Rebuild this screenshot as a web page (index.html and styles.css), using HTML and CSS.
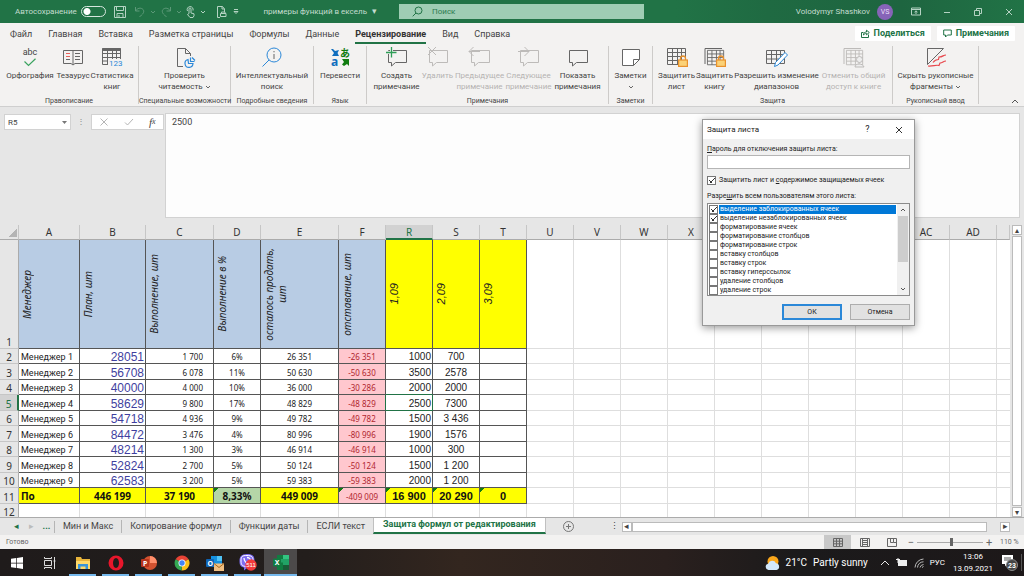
FILE: index.html
```html
<!DOCTYPE html>
<html lang="ru">
<head>
<meta charset="utf-8">
<meta name="viewport" content="width=device-width, initial-scale=1">
<title>примеры функций в ексель</title>
<link rel="stylesheet" href="styles.css">
</head>
<body>
<svg class="defs" aria-hidden="true">
  <symbol id="bubble" viewBox="0 0 22 20"><path d="M2.500 3.500h18v12h-11l-4 3.500v-3.500h-3z"/></symbol>
  <symbol id="sheet" viewBox="0 0 22 20"><path d="M1.500 1.500h18v16h-18zM1.500 5.500h18M1.500 9.500h18M1.500 13.500h18M6.500 1.500v16M11.500 1.500v16M15.500 1.500v16"/></symbol>
  <symbol id="lock" viewBox="0 0 10 12"><path d="M2.500 5V3.500a2.500 2.500 0 0 1 5 0V5" fill="none" stroke="#e8912d" stroke-width="1.300"/><rect x=".6" y="5" width="8.800" height="6.400" fill="#fbd277" stroke="#e8912d" stroke-width="1.200"/></symbol>
  <symbol id="chev" viewBox="0 0 6 4"><path d="M1 1l2 2 2-2"/></symbol>
</svg>

<header class="titlebar">
  <div class="title-left">
    <label class="autosave">Автосохранение <input type="checkbox" class="toggle"></label>
    <button class="tb save" aria-label="Сохранить"><svg width="12" height="12" viewBox="0 0 12 12"><path d="M.5.5h11v11h-11zM2.500.5v4h7v-4M3 11.500v-4h6v4M5 11V9"/></svg></button>
    <button class="tb dim" aria-label="Отменить"><svg width="12" height="12" viewBox="0 0 12 12"><path d="M1.500 1v4h4M1.500 5c2-3 5-3.500 7-2s1.500 4-1 6l-2 2"/></svg><svg width="6" height="4"><use href="#chev"/></svg></button>
    <button class="tb dim" aria-label="Повторить"><svg width="12" height="12" viewBox="0 0 12 12"><path d="M10.500 1v4h-4M10.500 5c-2-3-5-3.500-7-2s-1.500 4 1 6l2 2"/></svg><svg width="6" height="4"><use href="#chev"/></svg></button>
    <button class="tb" aria-label="Режим касания"><svg width="10" height="12" viewBox="0 0 10 12"><path d="M3 7.500V3a1 1 0 0 1 2 0v4l3 .8v2L7 11.500H4L1.500 8.500zM1.500 5a3 3 0 1 1 5.500-.5"/></svg><svg width="6" height="4"><use href="#chev"/></svg></button>
    <button class="tb print" aria-label="Печать"><svg width="11" height="12" viewBox="0 0 11 12"><path d="M4 11.500H1.500V.5h5l2 2.500v3M6 .5V3h2.500M4.500 7.500h5.500v3H4.500zM5.500 7.500V6h3.500v1.500"/></svg></button>
    <button class="tb" aria-label="Настройка"><svg width="6" height="6" viewBox="0 0 6 6"><path d="M1 .5h4M1 2.500l2 2 2-2z"/></svg></button>
    <button class="docname">примеры функций в ексель <span class="caret">▾</span></button>
  </div>
  <label class="search"><svg width="11" height="11" viewBox="0 0 11 11"><circle cx="6.500" cy="4.500" r="3.500"/><path d="M4 7L.7 10.300"/></svg><input type="text" placeholder="Поиск" aria-label="Поиск"></label>
  <div class="title-right">
    <span>Volodymyr Shashkov</span><span class="avatar">VS</span>
    <button class="win" aria-label="Параметры ленты"><svg width="10" height="9" viewBox="0 0 10 9"><path d="M.5 1h9v7h-9zM.5 2.500h9M5 7V4M3.500 5.200L5 3.800l1.500 1.400"/></svg></button>
    <button class="win" aria-label="Свернуть"><svg width="8" height="8"><path d="M1 4.500h6"/></svg></button>
    <button class="win" aria-label="Восстановить"><svg width="8" height="8"><path d="M.5 2.500h5v5h-5zM2.500 2.500v-2h5v5h-2"/></svg></button>
    <button class="win" aria-label="Закрыть"><svg width="8" height="8"><path d="M1 1l6 6M7 1L1 7"/></svg></button>
  </div>
</header>

<nav class="tabs">
  <a href="#">Файл</a><a href="#">Главная</a><a href="#">Вставка</a><a href="#">Разметка страницы</a><a href="#">Формулы</a><a href="#">Данные</a><a href="#" class="active">Рецензирование</a><a href="#">Вид</a><a href="#">Справка</a>
  <button class="pill share"><svg width="9" height="9" viewBox="0 0 9 9"><path d="M2.500 3.500h-2v5h7v-3M2.500 6c0-2 1-3 3-3V1.200L8.300 3.500 5.500 5.800V4.500c-1.500 0-2 .5-3 1.500z"/></svg>Поделиться</button>
  <button class="pill"><svg width="9" height="9" viewBox="0 0 9 9"><path d="M.7 1h7.600v5H4.500L2.500 8V6H.7z"/></svg>Примечания</button>
</nav>

<section class="ribbon">
  <div class="group g-spell">
    <div class="tools">
      <button class="tool w50"><span class="abc">abc<svg width="14" height="9" viewBox="0 0 14 9"><path d="M1.500 3.500l4 4L12.500.8" fill="none" stroke="#3aa35f" stroke-width="1.200"/></svg></span>Орфография</button>
      <button class="tool w36"><svg width="22" height="20" viewBox="0 0 22 20"><path d="M11 3.500v14M11 3.500H1.500v13H9l2 1.500 2-1.500h7.500v-13zM13 6.500h5M13 9.500h5M13 12.500h5M4 12.500h4"/><path d="M4 6.500h4M4 9.500h4" stroke="#e8605a"/></svg>Тезаурус</button>
      <button class="tool w42"><svg width="22" height="20" viewBox="0 0 22 20"><path d="M1.500 1.500h18v16h-18zM1.500 6.500h18M1.500 10.500h18M1.500 14h6M6.500 4v13M11.500 4v8M15.500 4v8"/><path d="M1.500 2.500h18" stroke-width="3"/><rect x="7" y="12" width="15" height="8" fill="#f3f2f1" stroke="none"/><text x="8" y="19" class="n123">123</text></svg>Статистика<br>книг</button>
    </div>
    <div class="caption">Правописание</div>
  </div>
  <div class="group g-access">
    <div class="tools"><button class="tool"><svg width="22" height="20" viewBox="0 0 22 20"><path d="M9 19.500H3.500v-18h8l5 5V9M11.500 1.500v5h5"/><path d="M14 12.500a4 4 0 1 0 5 4h-4.500zM16.500 10.500v4h4M18 10.500l3 3" stroke="#2b88d8" stroke-width="1.200"/></svg>Проверить<br>читаемость <svg class="ic" width="6" height="4"><use href="#chev"/></svg></button></div>
    <div class="caption">Специальные возможности</div>
  </div>
  <div class="group g-look">
    <div class="tools"><button class="tool"><svg width="22" height="20" viewBox="0 0 22 20"><circle cx="13" cy="8" r="7" stroke="#2b88d8"/><path d="M8 13l-6.500 6.500" stroke="#2b88d8"/><path d="M13 7v5M13 4v1.300"/></svg>Интеллектуальный<br>поиск</button></div>
    <div class="caption">Подробные сведения</div>
  </div>
  <div class="group g-lang">
    <div class="tools"><button class="tool"><svg width="22" height="20" viewBox="0 0 22 20"><path d="M2 2h2l2 2 4-1-1.500 3L10 9H3l2-3z" fill="#106ebe" stroke="none"/><text x="2" y="19" class="tr-a">a</text><text x="11" y="10" class="tr-ja">あ</text><path d="M13 12h7v7l-2-2-3 2-2-1.500 2-2.500z" fill="#107c10" stroke="none"/></svg>Перевести</button></div>
    <div class="caption">Язык</div>
  </div>
  <div class="group g-comm">
    <div class="tools">
      <button class="tool w46"><svg width="22" height="20" viewBox="0 0 22 20"><use href="#bubble"/><path d="M0 5.500h11M5.500 0v11" stroke="#f3f2f1" stroke-width="3"/><path d="M0 5.500h10.500M5.500 0v10.500" stroke="#2f9e58" stroke-width="1.300"/></svg>Создать<br>примечание</button>
      <button class="tool w36" disabled><svg width="22" height="20" viewBox="0 0 22 20"><use href="#bubble"/><path d="M1 0l8 8M9 0L1 8"/></svg>Удалить</button>
      <button class="tool w48" disabled><svg width="22" height="20" viewBox="0 0 22 20"><use href="#bubble"/><path d="M0 4.500h11M4.500 0L0 4.500 4.500 9"/></svg>Предыдущее<br>примечание</button>
      <button class="tool w50" disabled><svg width="22" height="20" viewBox="0 0 22 20"><use href="#bubble"/><path d="M0 4.500h11M6.500 0L11 4.500 6.500 9"/></svg>Следующее<br>примечание</button>
      <button class="tool w48"><svg width="22" height="20"><use href="#bubble"/></svg>Показать<br>примечания</button>
    </div>
    <div class="caption">Примечания</div>
  </div>
  <div class="group g-note">
    <div class="tools"><button class="tool"><svg width="22" height="20" viewBox="0 0 22 20"><path d="M2.500 2.500h17v10l-6 6h-11zM13.500 18.500v-6h6" fill="#fff"/></svg>Заметки<br><svg class="ic" width="6" height="4"><use href="#chev"/></svg></button></div>
    <div class="caption">Заметки</div>
  </div>
  <div class="group g-prot">
    <div class="tools">
      <button class="tool w38"><svg width="22" height="20" viewBox="0 0 22 20"><use href="#sheet"/><use href="#lock" x="12" y="8" width="10" height="12"/></svg>Защитить<br>лист</button>
      <button class="tool w38"><svg width="22" height="20" viewBox="0 0 22 20"><path d="M1 17V1.500h17"/><use href="#sheet" x="2" y="2" width="20" height="18"/><use href="#lock" x="12" y="8" width="10" height="12"/></svg>Защитить<br>книгу</button>
      <button class="tool w86"><svg width="22" height="20" viewBox="0 0 22 20"><path d="M.5 3.500h18v13h-18zM.5 7.500h18M.5 12h18M5.500 3.500v13M10.500 3.500v13M14.500 3.500v13"/><path d="M8.500 19.500l1-4L19 5.500l2.500 2.500-9.500 10z" fill="#fff" stroke="#2b88d8"/></svg>Разрешить изменение<br>диапазонов</button>
      <button class="tool w68" disabled><svg width="22" height="20" viewBox="0 0 22 20"><path d="M1 17V1.500h17"/><use href="#sheet" x="2" y="2" width="20" height="18"/><path d="M12 20c0-4 8-4 9 0z" fill="#eee"/><circle cx="16.500" cy="12.500" r="3" fill="#eee"/></svg>Отменить общий<br>доступ к книге</button>
    </div>
    <div class="caption">Защита</div>
  </div>
  <div class="group g-ink">
    <div class="tools"><button class="tool"><svg width="22" height="20" viewBox="0 0 22 20"><path d="M2.500 1.500h16l-16 16z"/><path d="M21 8c-3 0-3 2-7 2l-.5 2.500c-3 0-4 1-5.500 3M21 14c-3 0-3 2-6 2l-1 2.500c-3-1-6 1-11 .5" stroke="#e8474c" stroke-width="1.200"/></svg>Скрыть рукописные<br>фрагменты <svg class="ic" width="6" height="4"><use href="#chev"/></svg></button></div>
    <div class="caption">Рукописный ввод</div>
  </div>
  <button class="collapse" aria-label="Свернуть ленту"><svg width="8" height="5" viewBox="0 0 8 5"><path d="M1 4l3-3 3 3"/></svg></button>
</section>

<section class="formula">
  <div class="namebox"><input type="text" value="R5" aria-label="Имя"><svg width="5" height="3"><path d="M0 0h5L2.500 3z"/></svg></div>
  <span class="dots">⋮</span>
  <div class="fxbox">
    <button aria-label="Отмена"><svg width="10" height="10"><path d="M1.500 1.500l7 7M8.500 1.500l-7 7"/></svg></button>
    <button aria-label="Ввод"><svg width="10" height="10"><path d="M1 5.500L3.500 8 9 2"/></svg></button>
    <button class="fx" aria-label="Вставить функцию"><i>f</i><sub>x</sub></button>
  </div>
  <textarea class="fxinput" aria-label="Строка формул">2500</textarea>
</section>

<main class="sheet">
  <table class="cells">
    <colgroup><col class="c19"><col class="c61"><col class="c66"><col class="c68"><col class="c47"><col class="c78"><col class="c47" span="14"><col></colgroup>
    <thead><tr><th class="corner"></th><th>A</th><th>B</th><th>C</th><th>D</th><th>E</th><th>F</th><th class="sel">R</th><th>S</th><th>T</th><th>U</th><th>V</th><th>W</th><th>X</th><th></th><th></th><th></th><th></th><th>AC</th><th>AD</th><th></th></tr></thead>
    <tbody>
      <tr class="heads"><th>1</th><td><span>Менеджер</span></td><td><span>План, шт</span></td><td><span>Выполнение, шт</span></td><td><span>Выполнение в %</span></td><td><span>осталось продать,<br>шт</span></td><td><span>отставание, шт</span></td><td class="day"><span>1,09</span></td><td class="day"><span>2,09</span></td><td class="day"><span>3,09</span></td><td class="blank" colspan="11"></td></tr>
      <tr><th>2</th><td>Менеджер 1</td><td>28051</td><td>1 700</td><td>6%</td><td>26 351</td><td>-26 351</td><td>1000</td><td>700</td><td></td><td class="blank" colspan="11"></td></tr>
      <tr><th>3</th><td>Менеджер 2</td><td>56708</td><td>6 078</td><td>11%</td><td>50 630</td><td>-50 630</td><td>3500</td><td>2578</td><td></td><td class="blank" colspan="11"></td></tr>
      <tr><th>4</th><td>Менеджер 3</td><td>40000</td><td>4 000</td><td>10%</td><td>36 000</td><td>-30 286</td><td class="above">2000</td><td>2000</td><td></td><td class="blank" colspan="11"></td></tr>
      <tr><th class="sel">5</th><td>Менеджер 4</td><td>58629</td><td>9 800</td><td>17%</td><td>48 829</td><td class="before">-48 829</td><td class="cursor">2500</td><td>7300</td><td></td><td class="blank" colspan="11"></td></tr>
      <tr><th>6</th><td>Менеджер 5</td><td>54718</td><td>4 936</td><td>9%</td><td>49 782</td><td>-49 782</td><td>1500</td><td>3 436</td><td></td><td class="blank" colspan="11"></td></tr>
      <tr><th>7</th><td>Менеджер 6</td><td>84472</td><td>3 476</td><td>4%</td><td>80 996</td><td>-80 996</td><td>1900</td><td>1576</td><td></td><td class="blank" colspan="11"></td></tr>
      <tr><th>8</th><td>Менеджер 7</td><td>48214</td><td>1 300</td><td>3%</td><td>46 914</td><td>-46 914</td><td>1000</td><td>300</td><td></td><td class="blank" colspan="11"></td></tr>
      <tr><th>9</th><td>Менеджер 8</td><td>52824</td><td>2 700</td><td>5%</td><td>50 124</td><td>-50 124</td><td>1500</td><td>1 200</td><td></td><td class="blank" colspan="11"></td></tr>
      <tr><th>10</th><td>Менеджер 9</td><td>62583</td><td>3 200</td><td>5%</td><td>59 383</td><td>-59 383</td><td>2000</td><td>1 200</td><td></td><td class="blank" colspan="11"></td></tr>
      <tr class="total"><th>11</th><td>По</td><td>446 199</td><td>37 190</td><td class="flag">8,33%</td><td>449 009</td><td class="flag">-409 009</td><td class="flag">16 900</td><td class="flag">20 290</td><td class="flag">0</td><td class="blank" colspan="11"></td></tr>
      <tr class="empty"><th>12</th><td></td><td></td><td></td><td></td><td></td><td></td><td></td><td></td><td></td><td class="blank" colspan="11"></td></tr>
    </tbody>
  </table>
  <div class="vscroll"><button aria-label="Вверх">▴</button><div class="track"></div><button aria-label="Вниз">▾</button></div>
</main>

<nav class="sheettabs">
  <button class="nav" aria-label="Предыдущий лист">◂</button><button class="nav off" aria-label="Следующий лист">▸</button><button class="nav more">...</button>
  <a href="#">Мин и Макс</a><a href="#">Копирование формул</a><a href="#">Функции даты</a><a href="#" class="last">ЕСЛИ текст</a><a href="#" class="active">Защита формул от редактирования</a>
  <button class="add" aria-label="Новый лист"><svg width="11" height="11"><circle cx="5.500" cy="5.500" r="5"/><path d="M5.500 3v5M3 5.500h5"/></svg></button>
  <div class="hscroll"><span>⋮</span><button aria-label="Влево">◂</button><div class="track"></div><button aria-label="Вправо">▸</button></div>
</nav>

<footer class="status">
  <span>Готово</span>
  <div class="views">
    <button class="on" aria-label="Обычный"><svg width="10" height="9"><path d="M.5.5h9v8h-9zM.5 3.200h9M.5 5.800h9M3.500.5v8M6.500.5v8"/></svg></button>
    <button aria-label="Разметка"><svg width="10" height="9"><path d="M.5.5h9v8h-9zM2.500.5v8M7.500.5v8M3 2.500h4M3 4.500h4M3 6.500h4"/></svg></button>
    <button aria-label="Страничный"><svg width="10" height="9"><path d="M.5.5h9v8h-9zM3.500.5v4h3v-4M6.500 4.500h3"/></svg></button>
  </div>
  <button class="zoom">−</button><input type="range" class="range" value="52" aria-label="Масштаб"><button class="zoom">+</button><span class="pct">110 %</span>
</footer>

<footer class="taskbar">
  <button aria-label="Пуск"><svg width="12" height="12"><path d="M0 1.800L5.300 1v4.700H0zM6 .9L12 0v5.700H6zM0 6.400h5.300V11L0 10.300zM6 6.400h6V12l-6-.9z" fill="#fff"/></svg></button>
  <button aria-label="Представление задач"><svg width="12" height="12"><path d="M.5 0v1.500h7V0M.5 12v-1.500h7V12M.5 3.500h7v5h-7zM10.500 0v12M9.500 4h2" fill="none" stroke="#ddd"/></svg></button>
  <button class="run" aria-label="Проводник"><svg width="16" height="14"><path d="M1 1h5l1 2h8v10H1z" fill="#e9b53b"/><path d="M1 5h14v8H1z" fill="#ffd969"/><path d="M3 13V8h10v5h-2.500v-2.500h-5V13z" fill="#3a95d8"/></svg></button>
  <button class="run" aria-label="Opera"><svg width="16" height="16"><path d="M8 .5a7.500 7.500 0 1 0 0 15 7.500 7.500 0 1 0 0-15zM8 3c2 0 3 2.500 3 5s-1 5-3 5-3-2.500-3-5 1-5 3-5z" fill="#e8162b" fill-rule="evenodd"/></svg></button>
  <button class="run" aria-label="PowerPoint"><svg width="16" height="16"><circle cx="9" cy="8" r="7" fill="#d35230"/><path d="M9 1a7 7 0 0 1 7 7H9z" fill="#ff8f6b"/><rect y="4" width="8" height="8" rx="1" fill="#b7341c"/><text x="2" y="10.500" class="app">P</text></svg></button>
  <button class="run" aria-label="Chrome"><svg width="16" height="16"><path d="M8 8L1.600 4.200A7.500 7.500 0 0 1 14.500 4.300z" fill="#ea4335"/><path d="M8 8l6.500-3.700A7.500 7.500 0 0 1 7.500 15.500z" fill="#fbc116"/><path d="M8 8l-.5 7.500A7.500 7.500 0 0 1 1.600 4.200z" fill="#34a853"/><circle cx="8" cy="8" r="3.500" fill="#fff"/><circle cx="8" cy="8" r="2.700" fill="#4285f4"/></svg></button>
  <button class="run" aria-label="Outlook"><svg width="18" height="16"><path d="M5 1h11v11H5z" fill="#1490df"/><path d="M11 1h5v5h-5z" fill="#50c3f5"/><rect x="0" y="4" width="8" height="8" rx="1" fill="#0f64b5"/><text x="1.500" y="10.500" class="app">O</text><path d="M8 8.500h10V16H8z" fill="#f0bf82"/><path d="M8 8.500l5 4 5-4" fill="none" stroke="#a6691f"/></svg></button>
  <button class="run" aria-label="Viber"><svg width="18" height="17"><path d="M8 0c6 0 7.500 2 7.500 7S13 14 8 14l-3 2.500V13.500C1.500 13 .5 11 .5 7S2 0 8 0z" fill="#7f6df2"/><path d="M8 1.500c5 0 6 1.500 6 5.500s-2 5.500-6 5.500-6-1-6-5.500 1-5.500 6-5.500z" fill="none" stroke="#fff"/><path d="M5 4c0 3 2.500 6 5 6M8 3.500c2 0 3.500 1.500 3.500 3" fill="none" stroke="#fff" stroke-width="1.300"/><circle cx="12" cy="11" r="5.700" fill="#f23b3b"/><text x="12" y="13" text-anchor="middle" class="cnt">511</text></svg></button>
  <button class="run open" aria-label="Excel"><svg width="16" height="15"><path d="M4 0h12v15H4z" fill="#21a366"/><path d="M4 7.500h6V15H4zM4 0h6v4H4z" fill="#107c41"/><path d="M10 0h6v4h-6z" fill="#33c481"/><path d="M10 10h6v5H10z" fill="#185c37"/><rect y="3.500" width="8" height="8" rx="1" fill="#107c41"/><text x="1.800" y="10" class="app">X</text></svg></button>
  <div class="tray">
    <svg width="15" height="14"><circle cx="8" cy="5.500" r="5.500" fill="#fba71b"/><path d="M3.500 14a3.200 3.200 0 0 1-.3-6.300A4.200 4.200 0 0 1 11 7.300a3.400 3.400 0 0 1 .5 6.700z" fill="#d3e8fb"/></svg>
    <span class="weather"><span>21°C</span><span>Partly sunny</span></span>
    <svg width="10" height="6"><path d="M1 5l4-4 4 4" fill="none" stroke="#e8e8e8"/></svg>
    <svg width="12" height="9"><path d="M2 2h9v6H2z" fill="#eee"/><path d="M0 1.500h4M2 0v5" stroke="#eee"/></svg>
    <svg width="10" height="10"><path d="M1 9.500A9 9 0 0 1 9.500 1M3.500 9.500A6 6 0 0 1 9.500 3.800M6 9.500a4 4 0 0 1 3.500-3M8 9.500l1.500-1" fill="none" stroke="#bbb"/></svg>
    <span class="lang">РУС</span>
    <time>13:06<br>13.09.2021</time>
    <button class="notif" aria-label="Уведомления"><svg width="18" height="17"><path d="M1 1h11v9H6l-2 2.500V10H1z" fill="#fff"/><path d="M3 4h7M3 6h7" stroke="#555"/><circle cx="11" cy="11" r="5.500" fill="#444" stroke="#888"/><text x="11" y="14" text-anchor="middle" class="cnt big">23</text></svg></button>
  </div>
</footer>

<form class="dialog" role="dialog" aria-labelledby="dt">
  <div class="dlg-title"><span id="dt">Защита листа</span><button type="button" class="help">?</button><button type="button" aria-label="Закрыть"><svg width="8" height="8"><path d="M1 1l6 6M7 1L1 7" fill="none" stroke="#333"/></svg></button></div>
  <div class="dlg-body">
    <label for="pw"><u>П</u>ароль для отключения защиты листа:</label>
    <input type="text" id="pw" class="pw">
    <label class="protect"><input type="checkbox" checked><span>Защитить лист и <u>с</u>одержимое защищаемых ячеек</span></label>
    <div>Разре<u>ш</u>ить всем пользователям этого листа:</div>
    <div class="list">
      <div class="items">
        <label class="hot"><input type="checkbox" checked><span>выделение заблокированных ячеек</span></label>
        <label><input type="checkbox" checked><span>выделение незаблокированных ячеек</span></label>
        <label><input type="checkbox"><span>форматирование ячеек</span></label>
        <label><input type="checkbox"><span>форматирование столбцов</span></label>
        <label><input type="checkbox"><span>форматирование строк</span></label>
        <label><input type="checkbox"><span>вставку столбцов</span></label>
        <label><input type="checkbox"><span>вставку строк</span></label>
        <label><input type="checkbox"><span>вставку гиперссылок</span></label>
        <label><input type="checkbox"><span>удаление столбцов</span></label>
        <label><input type="checkbox"><span>удаление строк</span></label>
      </div>
      <div class="bar"><svg width="6" height="4" viewBox="0 0 6 4"><path d="M1 3l2-2 2 2"/></svg><div class="thumb"></div><svg width="6" height="4"><use href="#chev"/></svg></div>
    </div>
    <div class="actions"><button type="button" class="ok">ОК</button><button type="button">Отмена</button></div>
  </div>
</form>
</body>
</html>
```
FILE: styles.css
```css
* { box-sizing: border-box; }
body { margin: 0; height: 100vh; display: flex; flex-direction: column; overflow: hidden; position: relative; background: #e6e6e6; color: #444; font: 8px/11px Roboto, "Noto Sans", sans-serif; white-space: nowrap; }
button, input, textarea { font: inherit; color: inherit; border: 0; padding: 0; margin: 0; background: none; }
button { display: flex; align-items: center; justify-content: center; }
a { color: inherit; text-decoration: none; }
svg { flex: none; overflow: visible; }
.defs { position: absolute; width: 0; height: 0; }

/* Title bar */
.titlebar { height: 23px; flex: none; display: grid; grid-template-columns: 399fr 245fr 380fr; align-items: center; background: linear-gradient(90deg, #217346 66%, #1f6a42 75%, #1e6540 88%, #217346); color: #c4dccf; }
.titlebar svg { fill: none; stroke: #b5d3c3; }
.title-left { display: flex; align-items: center; padding-left: 15px; }
.autosave { display: flex; align-items: center; justify-content: space-between; gap: 4px; width: 91px; }
.toggle { appearance: none; width: 25px; height: 11px; border: 1px solid #d6e7de; border-radius: 6px; background: radial-gradient(circle at 5px 50%, #fff 3px, transparent 4px); }
.tb { gap: 4px; margin-right: 4px; }
.save { margin: 0 8px; }
.print { margin: 0 6px; }
.dim { opacity: .4; }
.docname { margin-left: auto; margin-right: 22px; gap: 5px; }
.caret { font-size: 9px; }
.search { display: flex; align-items: center; gap: 9px; height: 15px; padding-left: 13px; background: #9fcdb4; color: #217346; }
.search svg { stroke: #217346; }
.search input { flex: 1; min-width: 0; outline: 0; }
.search input::placeholder { color: #2c7b50; opacity: 1; }
.title-right { display: flex; align-items: center; justify-content: flex-end; }
.avatar { width: 16px; height: 16px; margin: 0 7px; border-radius: 50%; background: #8764b8; color: #e9dff5; font-size: 7px; line-height: 16px; text-align: center; }
.win { width: 31px; height: 23px; margin: 0; }

/* Ribbon tabs */
.tabs { height: 21px; flex: none; display: flex; align-items: center; gap: 16px; padding: 0 9px 0 10px; background: #f3f2f1; font-size: 9px; }
.tabs a { height: 20px; line-height: 20px; }
.tabs .active { font-weight: 700; color: #333; box-shadow: inset 0 -2px #217346; }
.pill { height: 15px; padding: 0 6px; gap: 4px; background: #fff; border-radius: 1px; color: #217346; font-weight: 700; margin-left: -10px; }
.share { margin-left: auto; }
.pill svg { fill: none; stroke: #217346; }

/* Ribbon */
.ribbon { height: 63px; flex: none; display: flex; padding-top: 2px; background: #f3f2f1; border-bottom: 1px solid #cfcfcf; }
.group { display: flex; flex-direction: column; height: 58px; border-right: 1px solid #cdcbc9; }
.g-spell { width: 139px; }
.g-access { width: 92px; }
.g-look { width: 83px; }
.g-lang { width: 53px; }
.g-comm { width: 242px; }
.g-note { width: 44px; }
.g-prot { width: 240px; }
.g-ink { width: 86px; }
.tools { display: flex; flex: 1; justify-content: center; align-items: flex-start; }
.tool { display: block; text-align: center; padding-top: 1px; line-height: 11px; }
.tool > svg, .abc { display: block; margin: 0 auto 3px; }
.tool svg { fill: none; stroke: #666; }
.tool > .ic { display: inline-block; margin: 0; vertical-align: middle; }
.tool:disabled { color: #b5b3b1; }
.tool:disabled svg { stroke: #bdbbb9; }
.tool .abc { font-size: 9px; height: 20px; }
.abc svg { display: block; margin: 0 auto; }
.w36 { width: 36px; }
.w38 { width: 38px; }
.w42 { width: 42px; }
.w46 { width: 46px; }
.w48 { width: 48px; }
.w50 { width: 50px; }
.w68 { width: 68px; }
.w86 { width: 86px; }
.w36, .w38, .w42, .w46, .w48, .w50, .w68, .w86 { display: flex; flex-direction: column; align-items: center; }
.n123 { font-size: 8px; fill: #2b88d8; stroke: none; }
.tr-a { font: 700 12px "Noto Sans", sans-serif; fill: #106ebe; stroke: none; }
.tr-ja { font: 700 10px "Noto Sans CJK JP", sans-serif; fill: #107c10; stroke: none; }
.caption { text-align: center; font-size: 7px; line-height: 6px; }
.collapse { margin: auto 5px 0 auto; padding-bottom: 2px; align-self: flex-end; }
.collapse svg { fill: none; stroke: #555; }

/* Formula bar */
.formula { height: 118px; flex: none; display: flex; align-items: flex-start; padding: 6px 4px 7px; }
.namebox, .fxbox { display: flex; align-items: center; height: 16px; margin-top: 1px; background: #fff; border: 1px solid #d2d2d2; }
.namebox { width: 67px; padding: 0 3px; }
.namebox input { flex: 1; min-width: 0; }
.namebox svg { fill: #777; }
.dots { width: 20px; text-align: center; line-height: 17px; color: #888; }
.fxbox { width: 73px; justify-content: space-around; }
.fxbox svg { fill: none; stroke: #b5b5b5; }
.fx { font: 11px/12px "Liberation Serif", serif; }
.fx sub { font-size: 8px; font-style: italic; }
.fxinput { flex: 1; align-self: stretch; margin-left: 1px; padding: 2px 6px; border: 1px solid #d2d2d2; background: #fdfdfd; resize: none; outline: 0; font-size: 9px; line-height: 12px; }

/* Grid */
.sheet { flex: 1; min-height: 0; display: flex; overflow: hidden; border-bottom: 1px solid #ababab; }
.cells { flex: 1; min-width: 0; table-layout: fixed; border-spacing: 0; background: #fff; color: #222; align-self: flex-start; width: 100%; font-family: "Noto Sans", sans-serif; }
.c19 { width: 19px; }
.c47 { width: 47px; }
.c61 { width: 61px; }
.c66 { width: 66px; }
.c68 { width: 68px; }
.c78 { width: 78px; }
.cells th, .cells td { padding: 0; overflow: hidden; }
.cells th { background: #e6e6e6; font-weight: 400; font-size: 10px; line-height: 12px; color: #333; }
thead th { height: 15px; border-right: 1px solid #c6c6c6; border-bottom: 1px solid #ababab; }
.cells tbody th { border-right: 1px solid #ababab; border-bottom: 1px solid #c6c6c6; vertical-align: bottom; }
.cells .corner { background: linear-gradient(135deg, transparent 50%, #b4b4b4 50%) 8px 3px / 9px 9px no-repeat #e6e6e6; }
.cells .sel { background: #d2d2d2; color: #217346; }
thead .sel { border-bottom: 2px solid #217346; }
.cells tbody .sel { border-right: 2px solid #217346; }
tbody tr { height: 16px; }
tbody tr:nth-child(even) { height: 15px; }
.cells tbody td { border-right: 1px solid #555; border-bottom: 1px solid #555; text-align: center; line-height: 12px; padding-top: 2px; }
.cells tbody td:nth-child(2) { text-align: left; padding-left: 2px; font: 9px/12px Roboto, "Noto Sans", sans-serif; }
.cells tbody td:nth-child(3) { text-align: right; padding-right: 1px; font: 12px/12px "Liberation Sans", sans-serif; color: #3f3fa0; }
.cells tbody td:nth-child(4) { text-align: right; padding-right: 10px; }
.cells tbody td:nth-child(7) { background-color: #ffc7ce; color: #b0262e; }
.cells tbody td:nth-child(8), .cells tbody td:nth-child(9), .cells tbody td:nth-child(10) { font: 10px/12px "Liberation Sans", sans-serif; }
.cells tbody td:nth-child(8) { text-align: right; padding-right: 1px; }
.cells tbody .blank { padding: 0; border: 0; border-bottom: 1px solid #dedede; background: repeating-linear-gradient(90deg, transparent 0 46px, #dedede 46px 47px); }
.cells tbody .cursor { border-color: #217346; }
.cells tbody .above { border-bottom-color: #217346; }
.cells tbody .before { border-right-color: #217346; }
tbody .heads { height: 109px; }
.cells tbody .heads td:not(.blank) { background: #b8cce4; color: #222; text-align: left; padding: 0 0 0 2px; font: italic 10px/13px "Noto Sans", sans-serif; }
.heads span { display: block; margin: 0 auto 0 0; writing-mode: vertical-rl; transform: rotate(180deg); text-align: center; }
.cells tbody .heads .day:not(.blank) { background: #ff0; font: italic 11px/13px "Liberation Sans", sans-serif; padding-left: 2px; }
.cells tbody .total td:not(.blank) { background-color: #ff0; font: 700 10px/12px "Noto Sans", sans-serif; color: #111; text-align: center; padding: 1px 0 0; }
.cells tbody .total td:nth-child(2):nth-child(2) { text-align: left; padding-left: 2px; }
.cells tbody .total .flag:nth-child(n+8) { font: 700 11px/12px "Liberation Sans", sans-serif; }
.cells tbody .total .flag:nth-child(5):not(.blank) { background-color: #b5d6a7; }
.cells tbody .total .flag:nth-child(7):not(.blank) { background-color: #ffc7ce; color: #b0262e; font-weight: 400; font-size: 8px; padding-top: 2px; }
.flag { background-image: linear-gradient(135deg, #107c10 3px, transparent 3px); }
.cells tbody .empty td { border-color: #dedede; background-color: #fff; height: 14px; }
.vscroll { width: 14px; display: flex; flex-direction: column; align-items: center; }
.vscroll button { width: 10px; height: 10px; border: 1px solid #bbb; background: #fff; font-size: 8px; }
.vscroll .track { flex: 1; width: 10px; background: #fff; border: 1px solid #bbb; margin: 1px 0; }

/* Sheet tabs */
.sheettabs { height: 17px; flex: none; display: flex; align-items: center; font-size: 9px; padding-left: 9px; }
.sheettabs a { padding: 0 8px; line-height: 13px; border-right: 1px solid #b5b5b5; }
.sheettabs .last { border: 0; }
.sheettabs .active { align-self: flex-start; height: 16px; padding: 0 9px; border: 1px solid #c0c0c0; border-width: 0 1px 2px; border-bottom-color: #217346; background: #fff; color: #217346; font-weight: 700; }
.nav { width: 15px; color: #217346; }
.off { color: #bbb; }
.more { width: 16px; border-right: 1px solid #b5b5b5; height: 12px; font-weight: 700; }
.add { margin-left: 17px; }
.add svg { fill: none; stroke: #777; }
.hscroll { flex: 1; display: flex; align-items: center; margin: 0 14px 0 36px; }
.hscroll span { width: 12px; }
.hscroll button { width: 10px; height: 10px; border: 1px solid #bbb; background: #fff; }
.hscroll .track { flex: 1; height: 10px; margin-right: 13px; background: #fff; border: 1px solid #bbb; }

/* Status bar */
.status { height: 14px; flex: none; display: flex; align-items: center; padding: 0 5px 0 6px; background: #f3f2f1; color: #666; font-size: 7px; }
.views { display: flex; margin: 0 0 0 auto; }
.views button { width: 27px; height: 14px; }
.views svg { fill: none; stroke: #666; }
.views .on { background: #c8c8c8; }
.zoom { width: 12px; font-size: 11px; }
.range { appearance: none; width: 66px; height: 8px; background: linear-gradient(#aaa, #aaa) center / 100% 1px no-repeat; }
.range::-webkit-slider-thumb { appearance: none; width: 3px; height: 8px; background: #666; }
.pct { margin-left: 5px; width: 19px; }

/* Taskbar */
.taskbar { height: 27px; flex: none; display: flex; background: linear-gradient(90deg, #1f1b1b, #231e1c 30%, #33261f 45%, #2a201e 65%, #1b1a1b 78%, #1d1819); color: #fff; }
.taskbar > button { width: 33px; height: 27px; }
.run { background: linear-gradient(#76b9ed, #76b9ed) center bottom / 27px 2px no-repeat; }
.taskbar > .open { background: linear-gradient(#76b9ed, #76b9ed) center bottom / 100% 2px no-repeat #4c4a4a; }
.app { font: 700 7px "Noto Sans", sans-serif; fill: #fff; }
.cnt { font: 6px "Liberation Sans", sans-serif; fill: #fff; }
.big { font-size: 7px; font-weight: 700; }
.tray { margin-left: auto; display: flex; align-items: center; gap: 6px; padding-right: 2px; }
.weather { display: flex; gap: 6px; font-size: 10px; margin-right: 6px; }
.lang { font-size: 8px; }
.tray time { width: 44px; text-align: center; font-size: 8px; line-height: 12px; }
.notif { border-right: 1px solid #555; padding-right: 2px; }

/* Protect sheet dialog */
.dialog { position: absolute; left: 702px; top: 119px; width: 213px; background: #f0f0f0; border: 1px solid #999; box-shadow: 0 2px 8px rgba(0, 0, 0, .4); color: #222; font-size: 7px; line-height: 9px; }
.dlg-title { display: flex; align-items: center; height: 19px; padding: 0 6px 0 4px; background: #fff; font-size: 8px; }
.dlg-title button { width: 19px; height: 19px; }
.dlg-title .help { margin-left: auto; margin-right: 12px; font-size: 9px; }
.dlg-body { padding: 6px 4px 5px; display: flex; flex-direction: column; }
.pw { height: 14px; margin: 1px 0 7px; border: 1px solid #b5b5b5; background: #fff; }
.dialog label { display: flex; align-items: center; }
.dialog label[for] { display: block; }
.dialog [type="checkbox"] { appearance: none; flex: none; width: 9px; height: 9px; border: 1px solid #777; background: #fff; }
.dialog [type="checkbox"]:checked { background: linear-gradient(135deg, transparent 42%, #333 42% 58%, transparent 58%) 2px 1px / 5px 5px no-repeat, linear-gradient(45deg, transparent 35%, #333 35% 65%, transparent 65%) 1px 3px / 3px 3px no-repeat #fff; }
.protect { margin-bottom: 7px; gap: 3px; }
.list { display: flex; margin-top: 2px; height: 93px; border: 1px solid #8a8a8a; background: #fff; overflow: hidden; }
.items { flex: 1; padding: 1px 1px 0; }
.items label { height: 9px; gap: 1px; }
.items span { flex: 1; padding-left: 1px; }
.hot span { background: #0078d7; color: #fff; }
.bar { width: 12px; display: flex; flex-direction: column; align-items: center; background: #f0f0f0; padding: 4px 1px; }
.bar svg { fill: none; stroke: #555; }
.thumb { width: 10px; height: 46px; margin: 4px 0 auto; background: #cdcdcd; }
.actions { display: flex; justify-content: flex-end; gap: 8px; margin-top: 8px; }
.actions button { width: 60px; height: 16px; border: 1px solid #adadad; background: #e1e1e1; }
.actions .ok { border: 2px solid #2b88d8; }
```
